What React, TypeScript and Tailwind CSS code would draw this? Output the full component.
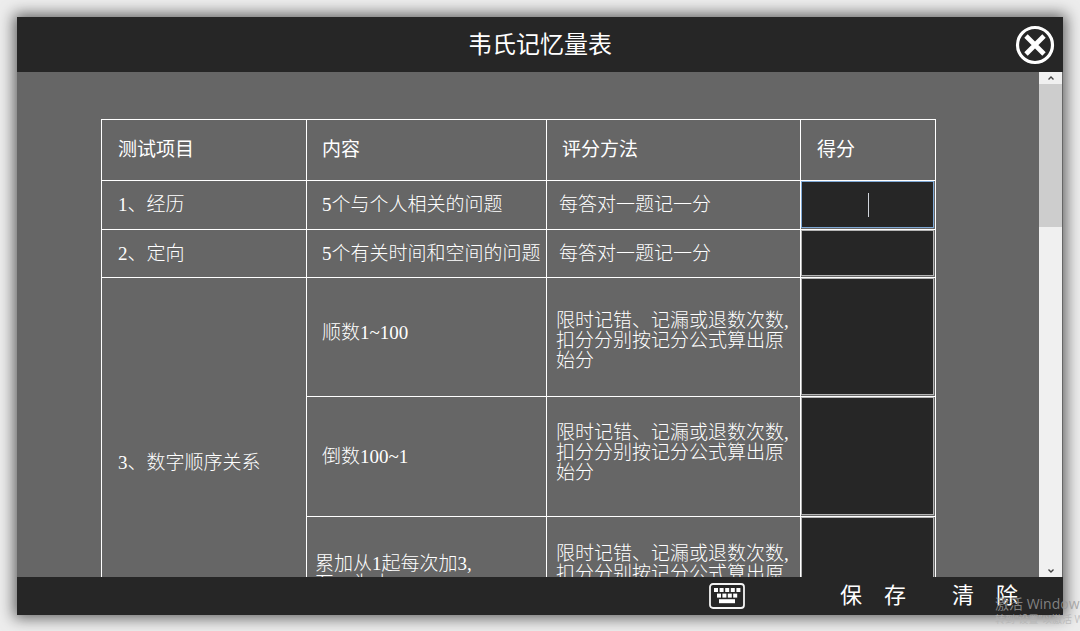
import React from "react";

type Item = {
  content: string;
  method: string;
  height: string;
  contentPad: string;
  methodPad: string;
  title?: string;
  span?: number;
};

const LONG_METHOD = "限时记错、记漏或退数次数,扣分分别按记分公式算出原始分";

const items: Item[] = [
  { title: "1、经历", content: "5个与个人相关的问题", method: "每答对一题记一分", height: "h-[49px]", contentPad: "pl-[15px]", methodPad: "pl-3" },
  { title: "2、定向", content: "5个有关时间和空间的问题", method: "每答对一题记一分", height: "h-12", contentPad: "pl-[15px]", methodPad: "pl-3" },
  { title: "3、数字顺序关系", span: 3, content: "顺数1~100", method: LONG_METHOD, height: "h-[119px]", contentPad: "pl-[15px] pb-2", methodPad: "pl-[9px] pt-2" },
  { content: "倒数100~1", method: LONG_METHOD, height: "h-[120px]", contentPad: "pl-[15px]", methodPad: "pl-[9px] pb-2" },
  { content: "累加从1起每次加3,至49为止", method: LONG_METHOD, height: "h-[131px]", contentPad: "pl-2 pr-16 pb-4", methodPad: "pl-[9px] pb-4" },
];

const KeyboardIcon = () => (
  <svg width="36" height="26" viewBox="0 0 36 26" fill="none">
    <rect x="1" y="1" width="34" height="24" rx="3" stroke="#f4f4f4" strokeWidth="1.8" />
    <g fill="#fff">
      {[5, 10.6, 16.2, 21.8, 27.4].map((x) => (
        <rect key={x} x={x} y="5" width="4" height="4" />
      ))}
      {[8, 13.4, 18.8, 24.2].map((x) => (
        <rect key={x} x={x} y="10.6" width="4" height="4" />
      ))}
      <rect x="10" y="16.2" width="16" height="4" />
    </g>
  </svg>
);

const CloseIcon = () => (
  <svg width="40" height="40" viewBox="0 0 40 40" fill="none" stroke="#fff">
    <circle cx="20" cy="20" r="17.5" strokeWidth="3.2" />
    <path d="M11 11L29 29M29 11L11 29" strokeWidth="4.8" />
  </svg>
);

const Arrow = ({ d }: { d: string }) => (
  <svg width="8" height="6" viewBox="0 0 8 6" fill="none" stroke="#444" strokeWidth="1.4">
    <path d={d} />
  </svg>
);

const App = () => {
  return (
    <div className="relative h-screen overflow-hidden bg-[#ededed] p-[17px] pb-4 font-['Liberation_Serif','Noto_Sans_CJK_SC',sans-serif] text-white">
      <div className="flex h-full flex-col shadow-[0_0_14px_3px_rgba(0,0,0,0.6)]">
        <header className="grid h-[55px] shrink-0 grid-cols-[1fr_auto_1fr] items-center bg-[#262626]">
          <h1 className="col-start-2 text-2xl">韦氏记忆量表</h1>
          <button aria-label="关闭" className="mr-2 cursor-pointer justify-self-end">
            <CloseIcon />
          </button>
        </header>

        <main className="flex min-h-0 flex-1 bg-[#666]">
          <div className="flex-1 overflow-hidden pt-[47px] pr-[103px] pl-[84px]">
            <table className="w-full table-fixed border-collapse text-left text-[19px] leading-5">
              <colgroup>
                <col className="w-[205px]" />
                <col className="w-[240px]" />
                <col />
                <col className="w-[135px]" />
              </colgroup>
              <thead>
                <tr className="h-[61px]">
                  <th className="border border-white pl-4 font-normal">测试项目</th>
                  <th className="border border-white pl-[15px] font-normal">内容</th>
                  <th className="border border-white pl-[15px] font-normal">评分方法</th>
                  <th className="border border-white pl-4 font-normal">得分</th>
                </tr>
              </thead>
              <tbody className="font-light">
                {items.map((item, i) => (
                  <tr key={i} className={item.height}>
                    {item.title && (
                      <td rowSpan={item.span} className="border border-white pl-4">
                        {item.title}
                      </td>
                    )}
                    <td className={`border border-white ${item.contentPad}`}>{item.content}</td>
                    <td className={`border border-white ${item.methodPad}`}>{item.method}</td>
                    <td className={`relative border border-white p-0 pr-px pb-px ${item.height}`}>
                      <input
                        type="text"
                        aria-label={`得分 ${item.content}`}
                        className={`block h-full w-full border bg-[#262626] text-center outline-none ${i === 0 ? "border-[#7fa9d6]" : "border-[#b4b4b4]"}`}
                      />
                      {i === 0 && (
                        <span className="pointer-events-none absolute inset-y-3 left-1/2 w-px bg-gray-300" />
                      )}
                    </td>
                  </tr>
                ))}
              </tbody>
            </table>
          </div>

          <div className="mr-px flex w-[23px] flex-col items-center bg-[#f0f0f0]">
            <div className="flex h-3 items-center">
              <Arrow d="M1.5 4.5L4 2L6.5 4.5" />
            </div>
            <div className="h-[143px] w-full bg-[#cdcdcd]" />
            <div className="mt-auto flex h-3 items-center">
              <Arrow d="M1.5 1.5L4 4L6.5 1.5" />
            </div>
          </div>
        </main>

        <footer className="flex h-[38px] shrink-0 items-center justify-end bg-[#262626] pr-[45px] text-[22px] leading-none">
          <button aria-label="键盘" className="mr-[95px] cursor-pointer">
            <KeyboardIcon />
          </button>
          <button className="mr-[46px] cursor-pointer">保　存</button>
          <button className="cursor-pointer">清　除</button>
        </footer>
      </div>

      <div className="pointer-events-none absolute top-[595px] left-[995px] font-['Open_Sans','Noto_Sans_CJK_SC',sans-serif] whitespace-nowrap text-[#9a9a9a]/80">
        <p className="text-sm leading-[18px]">激活 Windows</p>
        <p className="text-[10px] leading-3 text-[#b4b4b4]/80">转到“设置”以激活 Windows。</p>
      </div>
    </div>
  );
};

export default App;
